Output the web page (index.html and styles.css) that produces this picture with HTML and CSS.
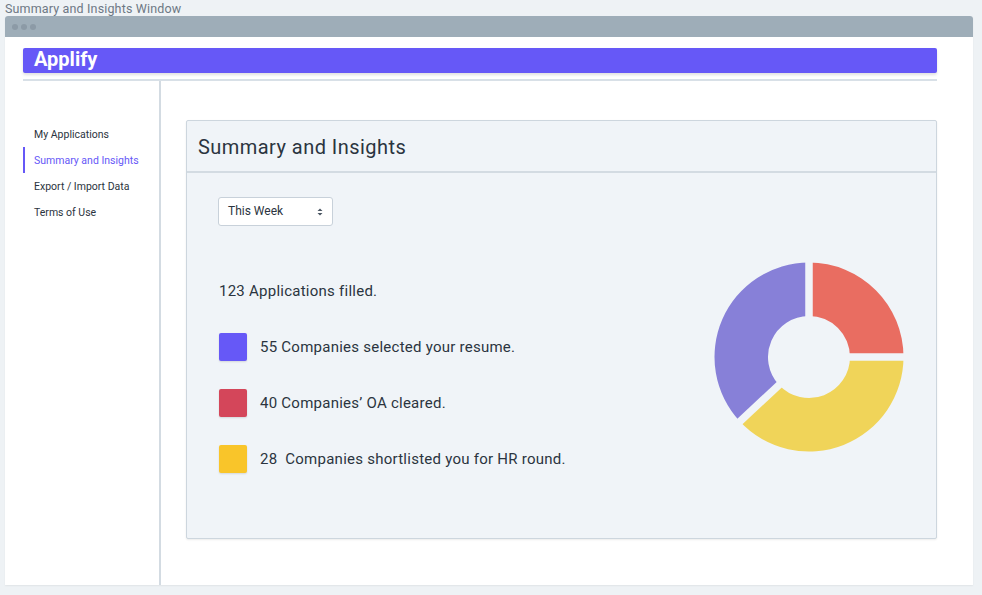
FILE: index.html
```html
<!DOCTYPE html>
<html>
<head>
<meta charset="utf-8">
<link rel="stylesheet" href="styles.css">
</head>
<body>
<div class="win-title">Summary and Insights Window</div>
<div class="window">
  <div class="titlebar"><span class="dot"></span><span class="dot"></span><span class="dot"></span></div>
  <div class="win-body">
    <div class="brand-bar">Applify</div>
    <div class="rule"></div>
    <div class="main">
      <nav class="sidebar">
        <a class="nav-item">My Applications</a>
        <a class="nav-item active">Summary and Insights</a>
        <a class="nav-item">Export / Import Data</a>
        <a class="nav-item">Terms of Use</a>
      </nav>
      <section class="content">
        <div class="card">
          <div class="card-head">Summary and Insights</div>
          <div class="card-body">
            <div class="select">This Week<span class="arrows">
              <svg width="6" height="8" viewBox="0 0 6 8"><path d="M3 0.5 L5.5 3 H0.5 Z M3 7.5 L5.5 5 H0.5 Z" fill="#4a5562"/></svg></span></div>
            <div class="row">
              <div class="stats">
                <p class="total">123 Applications filled.</p>
                <div class="legend"><span class="sw purple"></span><span>55 Companies selected your resume.</span></div>
                <div class="legend"><span class="sw red"></span><span>40 Companies’ OA cleared.</span></div>
                <div class="legend"><span class="sw yellow"></span><span>28&nbsp; Companies shortlisted you for HR round.</span></div>
              </div>
              <svg class="donut" width="200" height="200" viewBox="0 0 200 200">
                <path d="M100,5.5 A94.5,94.5 0 0 1 194.5,100 L141,100 A41,41 0 0 0 100,59 Z" fill="#e96d61"/>
                <path d="M194.5,100 A94.5,94.5 0 0 1 30.89,164.45 L70.01,127.96 A41,41 0 0 0 141,100 Z" fill="#f0d459"/>
                <path d="M30.89,164.45 A94.5,94.5 0 0 1 100,5.5 L100,59 A41,41 0 0 0 70.01,127.96 Z" fill="#8780d8"/>
                <g stroke="#f0f4f8" stroke-width="7.5">
                  <line x1="100" y1="100" x2="100" y2="0"/>
                  <line x1="100" y1="100" x2="200" y2="100"/>
                  <line x1="100" y1="100" x2="26.86" y2="168.2"/>
                </g>
              </svg>
            </div>
          </div>
        </div>
      </section>
    </div>
  </div>
</div>
</body>
</html>
```
FILE: styles.css
```css
* { box-sizing: border-box; }
html, body { margin: 0; padding: 0; }
body {
  background: #eef2f5;
  font-family: Roboto, "Noto Sans", sans-serif;
  color: #2b3440;
  width: 982px;
  height: 595px;
  overflow: hidden;
}
.win-title {
  font-size: 12.5px;
  letter-spacing: 0.15px;
  color: #6d7884;
  padding-left: 5px;
  height: 16px;
  line-height: 18px;
}
.window {
  margin-left: 5px;
  width: 968px;
  height: 569px;
  background: #fff;
  border-radius: 3px 3px 0 0;
  box-shadow: 0 1px 2px rgba(0,0,0,0.06);
  display: flex;
  flex-direction: column;
}
.titlebar {
  height: 21px;
  background: #9eadb8;
  border-radius: 3px 3px 0 0;
  display: flex;
  align-items: center;
  gap: 3px;
  padding-left: 7px;
  padding-top: 1px;
}
.dot {
  width: 6px;
  height: 6px;
  border-radius: 50%;
  background: #8c9aa6;
}
.win-body {
  flex: 1;
  display: flex;
  flex-direction: column;
  padding: 11px 36px 0 18px;
}
.brand-bar {
  height: 25px;
  background: #6658f7;
  color: #fff;
  font-weight: 700;
  font-size: 20px;
  line-height: 23px;
  padding-left: 11px;
  border-radius: 2px;
  box-shadow: 0 2px 3px rgba(0,0,0,0.12);
}
.rule {
  margin-top: 6px;
  height: 2px;
  background: #d8e0e7;
}
.main {
  flex: 1;
  display: flex;
}
.sidebar {
  width: 138px;
  border-right: 2px solid #d3dbe2;
  padding-top: 40px;
  display: flex;
  flex-direction: column;
}
.nav-item {
  height: 26px;
  line-height: 28px;
  font-size: 10.5px;
  color: #2b3440;
  padding-left: 11px;
}
.nav-item.active {
  color: #6658f7;
  border-left: 2px solid #6658f7;
  padding-left: 9px;
}
.content {
  flex: 1;
  padding: 39px 0 0 25px;
}
.card {
  height: 419px;
  background: #f0f4f8;
  border: 1px solid #cdd6de;
  border-radius: 2px;
  box-shadow: 0 1px 2px rgba(0,0,0,0.08);
  display: flex;
  flex-direction: column;
}
.card-head {
  height: 52px;
  line-height: 52px;
  font-size: 20px;
  letter-spacing: 0.45px;
  padding-left: 11px;
  color: #2b3440;
  border-bottom: 2px solid #d3dbe2;
}
.card-body {
  padding: 24px 27px 0 31px;
}
.select {
  width: 115px;
  height: 29px;
  background: #fff;
  border: 1px solid #c8d1da;
  border-radius: 3px;
  font-size: 12px;
  line-height: 29px;
  padding-left: 9px;
  padding-right: 9px;
  display: flex;
  justify-content: space-between;
  align-items: center;
}
.arrows { display: flex; align-items: center; }
.row {
  display: flex;
  justify-content: space-between;
  align-items: flex-start;
}
.stats { padding-top: 55px; }
.total {
  margin: 0 0 32px 1px;
  font-size: 15px;
  letter-spacing: 0.25px;
  line-height: 20px;
}
.legend {
  display: flex;
  align-items: center;
  gap: 13px;
  height: 28px;
  margin-bottom: 28px;
  font-size: 15px;
  letter-spacing: 0.25px;
  padding-left: 1px;
}
.sw {
  width: 28px;
  height: 28px;
  border-radius: 2px;
  box-shadow: 0 1px 2px rgba(0,0,0,0.12);
}
.sw.purple { background: #6658f7; }
.sw.red { background: #d4465a; }
.sw.yellow { background: #f9c52a; }
.donut {
  margin-top: 31px;
}
```
